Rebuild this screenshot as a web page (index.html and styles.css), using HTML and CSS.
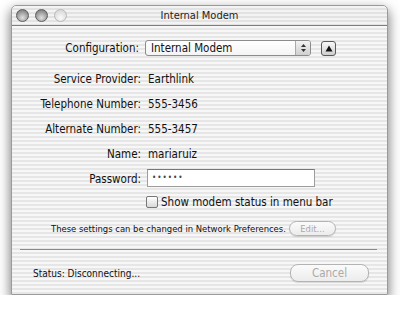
FILE: index.html
```html
<!DOCTYPE html>
<html lang="en">
<head>
    <meta charset="UTF-8">
    <title>Internal Modem</title>
    <link rel="stylesheet" href="styles.css">
</head>
<body>
    <div class="window">
        <div class="titlebar">
            <div class="lights">
                <span class="light"></span>
                <span class="light"></span>
                <span class="light off"></span>
            </div>
            <div class="title">Internal Modem</div>
        </div>

        <div class="content">
            <div class="config">
                <span class="label">Configuration:</span>
                <div class="popup">
                    <span>Internal Modem</span>
                    <span class="arrows">
                        <svg width="7" height="10" viewBox="0 0 7 10"><path d="M3.5 1 L6 4 H1 Z M3.5 9 L6 6 H1 Z" fill="#333"/></svg>
                    </span>
                </div>
                <div class="disclose">
                    <svg width="8" height="7" viewBox="0 0 8 7"><path d="M4 0.5 L7.5 6.5 H0.5 Z" fill="#111"/></svg>
                </div>
            </div>

            <div class="form">
                <span class="label">Service Provider:</span><span class="value">Earthlink</span>
                <span class="label">Telephone Number:</span><span class="value">555-3456</span>
                <span class="label">Alternate Number:</span><span class="value">555-3457</span>
                <span class="label">Name:</span><span class="value">mariaruiz</span>
                <span class="label">Password:</span><span class="field">••••••</span>
                <span></span>
                <label class="check"><span class="box"></span>Show modem status in menu bar</label>
            </div>

            <div class="note">
                <span>These settings can be changed in Network Preferences.</span>
                <span class="btn edit">Edit...</span>
            </div>

            <div class="sep"></div>

            <div class="footer">
                <span>Status: Disconnecting...</span>
                <span class="btn cancel">Cancel</span>
            </div>
        </div>
    </div>
</body>
</html>
```

FILE: styles.css
```css
body {
    margin: 0;
    background: #fff;
    font-family: "DejaVu Sans Condensed", "DejaVu Sans", sans-serif;
    font-size: 11.5px;
    color: #111;
}
.window {
    margin: 5px 0 0 11px;
    width: 377px;
    height: 290px;
    box-sizing: border-box;
    border: 1px solid #9a9a9a;
    border-radius: 5px 5px 0 0;
    background: repeating-linear-gradient(180deg, #f7f7f7 0, #f7f7f7 2px, #e6e6e6 2px, #e6e6e6 4px);
    box-shadow: 0 5px 12px 1px rgba(0, 0, 0, 0.5);
    display: flex;
    flex-direction: column;
}
.titlebar {
    height: 19px;
    border-bottom: 1px solid #7d7d7d;
    display: flex;
    align-items: center;
    position: relative;
    background: repeating-linear-gradient(180deg, #f3f3f3 0, #f3f3f3 2px, #e2e2e2 2px, #e2e2e2 4px);
    border-radius: 5px 5px 0 0;
}
.lights {
    display: flex;
    gap: 6px;
    padding-left: 4px;
}
.light {
    width: 11px;
    height: 11px;
    border-radius: 50%;
    border: 1px solid #5c5c5c;
    background: radial-gradient(circle at 50% 70%, #e0e0e0, #9a9a9a 60%, #6e6e6e);
}
.light.off {
    border-color: #b8b8b8;
    background: radial-gradient(circle at 50% 70%, #fafafa, #dcdcdc 70%);
}
.title {
    position: absolute;
    left: 0;
    right: 0;
    text-align: center;
    font-size: 11px;
    color: #222;
}
.content {
    flex: 1;
    display: flex;
    flex-direction: column;
}
.config {
    display: flex;
    align-items: center;
    margin-top: 13px;
    height: 18px;
}
.config .label {
    width: 127px;
    text-align: right;
    margin-right: 6px;
}
.popup {
    width: 166px;
    height: 16px;
    box-sizing: border-box;
    border: 1px solid #8c8c8c;
    border-radius: 3px;
    background: linear-gradient(#fff, #f4f4f4);
    display: flex;
    align-items: center;
    justify-content: space-between;
    padding-left: 5px;
}
.arrows {
    width: 14px;
    height: 14px;
    border-left: 1px solid #aaa;
    display: flex;
    align-items: center;
    justify-content: center;
    background: linear-gradient(#f2f2f2, #cfcfcf);
    border-radius: 0 2px 2px 0;
}
.disclose {
    margin-left: 10px;
    width: 15px;
    height: 15px;
    box-sizing: border-box;
    border: 1px solid #5a5a5a;
    border-radius: 3px;
    background: linear-gradient(#f8f8f8, #cfcfcf);
    display: flex;
    align-items: center;
    justify-content: center;
}
.form {
    display: grid;
    grid-template-columns: 129px 1fr;
    column-gap: 6px;
    grid-auto-rows: 25px;
    align-items: center;
    margin-top: 9px;
}
.form .label {
    text-align: right;
}
.form .value {
    padding-left: 1px;
}
.field {
    width: 168px;
    height: 18px;
    margin-top: -2px;
    box-sizing: border-box;
    border: 1px solid #9d9d9d;
    border-top-color: #777;
    background: #fff;
    font-size: 8px;
    letter-spacing: 1px;
    display: flex;
    align-items: center;
    padding-left: 4px;
    color: #444;
}
.check {
    display: flex;
    align-items: center;
    gap: 3px;
    height: 18px;
    margin-top: 2px;
    margin-left: -1px;
    align-self: start;
}
.box {
    width: 10px;
    height: 10px;
    border: 1px solid #777;
    border-radius: 2px;
    background: linear-gradient(#fff, #d8d8d8);
}
.note {
    display: flex;
    align-items: center;
    margin-top: 4px;
    padding-left: 39px;
    font-size: 9.4px;
    height: 16px;
}
.btn {
    border: 1px solid #b3b3b3;
    border-radius: 8px;
    background: linear-gradient(#fbfbfb, #ececec);
    color: #aaa;
    text-align: center;
    box-sizing: border-box;
    box-shadow: 0 1px 1px rgba(0, 0, 0, 0.12);
}
.edit {
    margin-left: 3px;
    width: 47px;
    height: 15px;
    line-height: 13px;
    font-size: 9.4px;
}
.sep {
    margin: 13px 10px 0 8px;
    border-top: 1px solid #8a8a8a;
}
.footer {
    display: flex;
    align-items: center;
    justify-content: space-between;
    margin-top: 14px;
    padding: 0 18px 0 21px;
    font-size: 10px;
}
.cancel {
    width: 79px;
    height: 18px;
    line-height: 16px;
    font-size: 11.5px;
}
```
